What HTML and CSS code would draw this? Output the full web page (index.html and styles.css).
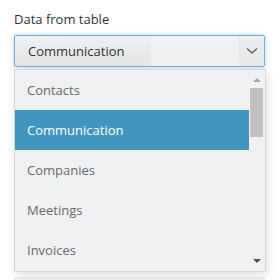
FILE: index.html
```html
<html>
  <head>
    <meta charset="utf-8">
    <title>Data from table</title>
    <link rel="stylesheet" href="styles.css">
  </head>
<body>

<div class="field">
  <label class="field-label">Data from table</label>
  <div class="select open">
    <span class="select-value">Communication</span>
    <span class="select-shine"></span>
    <span class="select-arrow">
      <svg width="12" height="8" viewBox="0 0 12 8"><path d="M1 1.5 L6 6 L11 1.5" fill="none" stroke="#6b6b6b" stroke-width="1.6"/></svg>
    </span>
  </div>

  <div class="dropdown">
    <ul class="options">
      <li>Contacts</li>
      <li class="selected">Communication</li>
      <li>Companies</li>
      <li>Meetings</li>
      <li>Invoices</li>
    </ul>
    <div class="scrollbar">
      <span class="scroll-up"></span>
      <span class="scroll-thumb"></span>
      <span class="scroll-down"></span>
    </div>
  </div>
</div>

<div class="select next"></div>

</body></html>
```

FILE: styles.css
```css
body {
  margin: 0;
  padding: 10px 14px 0 14px;
  font-family: "Open Sans", sans-serif;
  background: #fff;
}

.field-label {
  display: block;
  font-size: 13px;
  line-height: 18px;
  color: #333;
  margin-bottom: 7px;
}

.select {
  position: relative;
  display: flex;
  align-items: center;
  height: 32px;
  box-sizing: border-box;
  border: 1px solid #d3d5d8;
  border-radius: 2px;
  background: linear-gradient(#eef0f2, #e2e4e6);
  width: 251px;
}

.select.open {
  border-color: #75aee0;
  box-shadow: 0 0 4px rgba(110, 170, 225, 0.6);
}

.select-value {
  padding-left: 13px;
  font-size: 13px;
  color: #333;
  width: 123px;
}

.select-shine {
  align-self: stretch;
  width: 88px;
  background: linear-gradient(#f2f3f4, #eceef0);
}

.select-arrow {
  align-self: stretch;
  flex: 1;
  display: flex;
  align-items: center;
  justify-content: center;
  border-left: 1px solid #e4e6e8;
  background: linear-gradient(#eceef0, #e4e6e8);
}

.dropdown {
  position: relative;
  margin-top: 2px;
  width: 252px;
  height: 203px;
  box-sizing: border-box;
  border: 1px solid #d6d8db;
  background: #f0f1f3;
  box-shadow: 2px 3px 8px rgba(0, 0, 0, 0.12);
  display: flex;
  z-index: 2;
}

.options {
  list-style: none;
  margin: 0;
  padding: 0;
  width: 234px;
}

.options li {
  height: 40px;
  line-height: 40px;
  padding-left: 12px;
  font-size: 13px;
  color: #6a6a6a;
}

.options li.selected {
  background: #4096be;
  color: #fff;
}

.scrollbar {
  position: relative;
  width: 16px;
}

.scroll-up, .scroll-down {
  position: absolute;
  left: 4px;
  width: 0;
  height: 0;
  border-left: 4px solid transparent;
  border-right: 4px solid transparent;
}

.scroll-up {
  top: 8px;
  border-bottom: 4px solid #a3a3a3;
}

.scroll-down {
  bottom: 8px;
  border-top: 4px solid #505050;
}

.scroll-thumb {
  position: absolute;
  top: 18px;
  left: 1px;
  width: 13px;
  height: 49px;
  background: #c1c1c1;
}

.select.next {
  margin-top: 5px;
  border-color: #e6e7e9;
  background: linear-gradient(#f1f2f3, #e6e8ea);
}
```
